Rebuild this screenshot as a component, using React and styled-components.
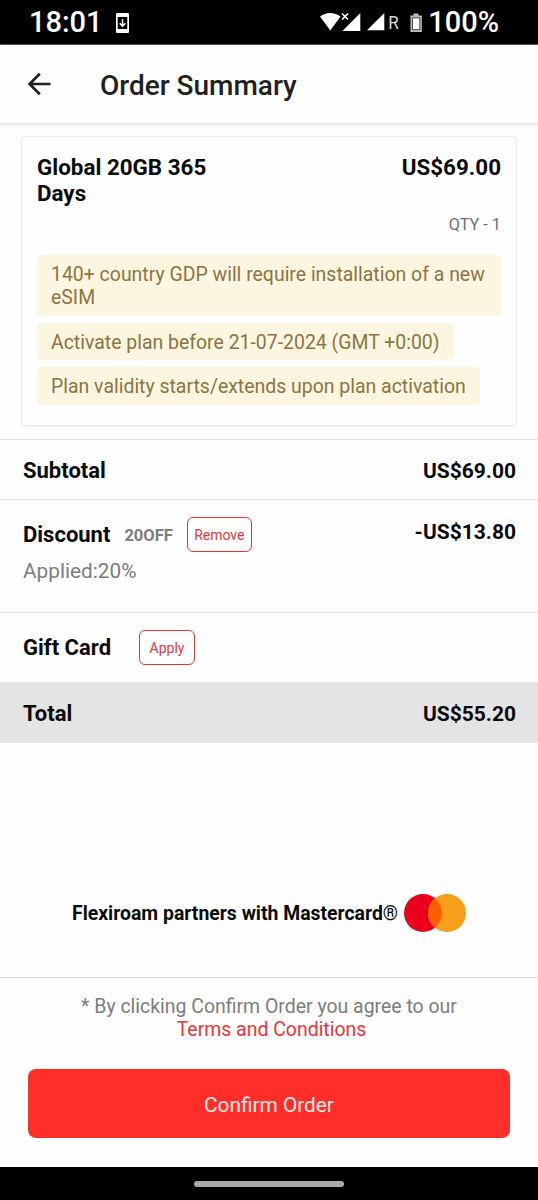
import React from 'react';
import styled, { createGlobalStyle } from "styled-components";

const GlobalStyle = createGlobalStyle`
* {
    box-sizing:border-box;
}

body {
    margin:0;
    background-color:#fefefe;
    font-family:Roboto, sans-serif;
    color:#0b0b0b;
}
`;

const Screen = styled.div`
display:flex;
flex-direction:column;
width:538px;
height:1200px;
overflow:hidden;
background-color:#fefefe;
`;

const StatusBar = styled.div`
display:flex;
justify-content:space-between;
align-items:center;
height:45px;
padding:0 39px 0 29px;
border-bottom:1px solid #555;
background-color:#000;
color:#fff;
flex-shrink:0;
`;

const StatusGroup = styled.div`
display:flex;
align-items:center;
`;

const StatusText = styled.span`
font-size:29px;
font-weight:500;
line-height:44px;
letter-spacing:${(props) => props.$spacing || "0"};
`;

const UpdateIcon = styled.svg`
margin:1px 0 0 13px;
`;

const Header = styled.header`
display:flex;
align-items:center;
height:79px;
padding-left:26px;
border-bottom:1px solid #e6e6e6;
box-shadow:0 1px 4px rgba(0, 0, 0, 0.12);
flex-shrink:0;
`;

const BackButton = styled.button`
display:flex;
width:26px;
height:26px;
padding:0;
border:0;
background:none;
`;

const Title = styled.h1`
margin:3px 0 0 48px;
font-size:28px;
font-weight:500;
line-height:36px;
color:#212121;
`;

const Card = styled.section`
height:290px;
margin:12px 21px 13px;
padding:17px 15px 0;
border:1px solid #ebebeb;
border-radius:4px;
box-shadow:0 1px 1px rgba(0, 0, 0, 0.05);
flex-shrink:0;
`;

const CardTop = styled.div`
display:flex;
justify-content:space-between;
align-items:flex-start;
`;

const PlanName = styled.h2`
width:190px;
margin:0;
font-size:22.4px;
font-weight:700;
line-height:26px;
color:#0b0b0b;
`;

const Price = styled.span`
margin-top:${(props) => props.$top || "0"};
font-size:${(props) => props.$size || "21px"};
font-weight:700;
line-height:26px;
color:#0b0b0b;
`;

const Quantity = styled.div`
margin-top:9px;
font-size:16.3px;
line-height:20px;
text-align:right;
color:#6f6f6f;
`;

const Notices = styled.div`
display:flex;
flex-direction:column;
align-items:flex-start;
gap:7px;
margin-top:20px;
`;

const Notice = styled.div`
padding:8px 14px 6.5px;
border-radius:4px;
background-color:#fcf6e0;
font-size:19.45px;
line-height:23px;
color:#8c7444;
`;

const Row = styled.div`
display:flex;
justify-content:space-between;
align-items:flex-start;
height:${(props) => props.$height};
padding:17px 22px 0 23px;
border-top:1px solid #e2e2e2;
background-color:${(props) => (props.$total ? "#e4e4e4" : "transparent")};
flex-shrink:0;
`;

const RowLeft = styled.div`
display:flex;
align-items:center;
`;

const Label = styled.span`
padding-top:1px;
font-size:22px;
font-weight:700;
line-height:26px;
`;

const Code = styled.span`
padding-top:2px;
margin-left:14px;
font-size:16.5px;
font-weight:700;
color:#7d7d7d;
`;

const OutlineButton = styled.button`
width:${(props) => props.$width};
height:35px;
margin-left:${(props) => props.$gap};
padding:0;
border:1.5px solid #e5373a;
border-radius:6px;
background:none;
font-family:inherit;
font-size:14px;
color:#e5373a;
`;

const Applied = styled.div`
margin-top:6px;
font-size:20.8px;
line-height:26px;
color:#7d7d7d;
`;

const Partner = styled.div`
display:flex;
align-items:center;
margin:150px 0 0 72px;
font-size:19.4px;
font-weight:700;
line-height:40px;
`;

const PartnerText = styled.span`
padding-top:2px;
line-height:38px;
`;

const Registered = styled.span`
font-size:19.4px;
font-weight:500;
`;

const MastercardLogo = styled.svg`
margin:0 0 1px 6px;
`;

const Footer = styled.footer`
height:190px;
margin-top:44px;
padding:17px 28px 0;
border-top:1px solid #e2e2e2;
flex-shrink:0;
`;

const Terms = styled.p`
margin:0;
font-size:19.45px;
line-height:23px;
text-align:center;
color:#7d7d7d;
`;

const TermsLink = styled.span`
padding-left:5px;
color:#e8363a;
`;

const ConfirmButton = styled.button`
display:block;
width:100%;
height:69px;
margin-top:28px;
padding:3px 0 0;
border:0;
border-radius:8px;
background-color:#ff2e29;
font-family:inherit;
font-size:20.8px;
color:#ffecea;
`;

const NavBar = styled.div`
display:flex;
justify-content:center;
height:34px;
padding-top:14px;
background-color:#000;
flex-shrink:0;
`;

const NavHandle = styled.div`
width:150px;
height:6px;
border-radius:3px;
background-color:#a9a9a9;
`;

const notices = [
    "140+ country GDP will require installation of a new eSIM",
    "Activate plan before 21-07-2024 (GMT +0:00)",
    "Plan validity starts/extends upon plan activation",
];

const StatusIcons = () => (
    <svg width="108" height="44" viewBox="0 0 108 44" fill="#fff">
        <path d="M0 16.4C6 11.7 14.5 11.7 20.5 16.4L10.3 30.5Z" />
        <path d="M22 13.5L28 19.5M28 13.5L22 19.5" stroke="#fff" strokeWidth="1.6" />
        <path d="M22.5 31L40.3 13V31Z" />
        <path d="M47 30.3L64.3 13V30.3Z" />
        <text x="68.2" y="29.3" fontSize="19" fill="#d8d8d8" textLength="10.5" lengthAdjust="spacingAndGlyphs">R</text>
        <path d="M93.5 13.5H98.5V15.5H101.8V32H90.5V15.5H93.5Z" fill="#bdbdbd" />
        <path d="M92.5 17.8H99.8V29.7H92.5Z" stroke="#222" strokeWidth="0.8" />
    </svg>
);

const App = () => {
    return (
        <Screen>
            <GlobalStyle />
            <StatusBar>
                <StatusGroup>
                    <StatusText>18:01</StatusText>
                    <UpdateIcon width="13" height="20" viewBox="0 0 13 20">
                        <path fill="#fff" fillRule="evenodd" d="M1.3 0H11.7Q13 0 13 1.3V18.7Q13 20 11.7 20H1.3Q0 20 0 18.7V1.3Q0 0 1.3 0ZM1.7 4V16H11.3V4Z" />
                        <path d="M6.5 6V13M3.7 10.3L6.5 13.1L9.3 10.3" fill="none" stroke="#fff" strokeWidth="1.5" />
                    </UpdateIcon>
                </StatusGroup>
                <StatusGroup>
                    <StatusIcons />
                    <StatusText>100%</StatusText>
                </StatusGroup>
            </StatusBar>

            <Header>
                <BackButton aria-label="Back">
                    <svg width="26" height="26" viewBox="0 0 26 26" fill="none" stroke="#212121" strokeWidth="2.7">
                        <path d="M24.5 13H4M13.8 2.8L3.6 13L13.8 23.2" />
                    </svg>
                </BackButton>
                <Title>Order Summary</Title>
            </Header>

            <Card>
                <CardTop>
                    <PlanName>Global 20GB 365 Days</PlanName>
                    <Price $size="22.4px">US$69.00</Price>
                </CardTop>
                <Quantity>QTY - 1</Quantity>
                <Notices>
                    {notices.map((text) => <Notice key={text}>{text}</Notice>)}
                </Notices>
            </Card>

            <Row $height="60px">
                <Label>Subtotal</Label>
                <Price $top="1px">US$69.00</Price>
            </Row>
            <Row $height="113px">
                <div>
                    <RowLeft>
                        <Label>Discount</Label>
                        <Code>20OFF</Code>
                        <OutlineButton $width="65px" $gap="14px">Remove</OutlineButton>
                    </RowLeft>
                    <Applied>Applied:20%</Applied>
                </div>
                <Price $top="2px">-US$13.80</Price>
            </Row>
            <Row $height="70px">
                <RowLeft>
                    <Label>Gift Card</Label>
                    <OutlineButton $width="56px" $gap="28px">Apply</OutlineButton>
                </RowLeft>
            </Row>
            <Row $height="61px" $total>
                <Label>Total</Label>
                <Price $top="1px">US$55.20</Price>
            </Row>

            <Partner>
                <PartnerText>Flexiroam partners with Mastercard<Registered>®</Registered></PartnerText>
                <MastercardLogo width="62" height="38" viewBox="0 0 62 38">
                    <circle cx="19" cy="19" r="19" fill="#eb001b" />
                    <circle cx="43" cy="19" r="19" fill="#f79e1b" />
                    <path d="M31 4.3A19 19 0 0 1 31 33.7A19 19 0 0 1 31 4.3Z" fill="#ff5f00" />
                </MastercardLogo>
            </Partner>

            <Footer>
                <Terms>
                    * By clicking Confirm Order you agree to our<br />
                    <TermsLink>Terms and Conditions</TermsLink>
                </Terms>
                <ConfirmButton>Confirm Order</ConfirmButton>
            </Footer>

            <NavBar>
                <NavHandle />
            </NavBar>
        </Screen>
    )
}

export default App;
